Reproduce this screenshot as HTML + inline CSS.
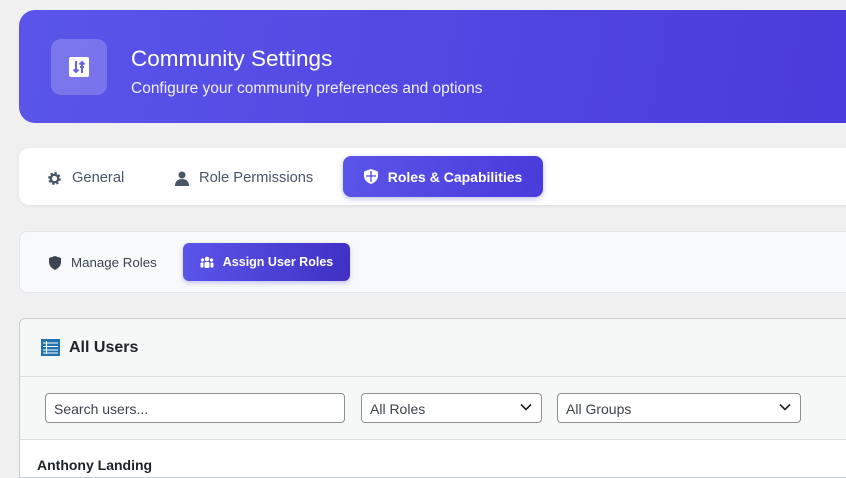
<!DOCTYPE html>
<html><head><style>
*{box-sizing:border-box;margin:0;padding:0}
body{width:846px;height:467px;overflow:hidden;background:#f0f0f1;font-family:"Liberation Sans",sans-serif;position:relative}
.hdr{position:absolute;left:19px;top:10px;width:850px;height:113px;border-radius:16px;background:linear-gradient(100deg,#5a55e9,#4a3adb)}
.ico{position:absolute;left:32px;top:29px;width:56px;height:56px;border-radius:10px;background:rgba(255,255,255,.2)}
.h1{position:absolute;left:112px;top:36px;color:#fff;font-size:22.5px}
.sub{position:absolute;left:112px;top:70px;color:#eef;font-size:15.5px}
.tabs{position:absolute;left:19px;top:148px;width:850px;height:57px;background:#fff;border-radius:10px;box-shadow:0 1px 3px rgba(0,0,0,.08)}
.t{position:absolute;top:22px;font-size:14.7px;color:#4a5565;display:flex;align-items:center;gap:10px}
.act{position:absolute;left:324px;top:8px;width:200px;height:41px;border-radius:8px;background:linear-gradient(100deg,#5b55e9,#4a3adb);color:#fff;font-weight:bold;font-size:14px;display:flex;align-items:center;justify-content:center;gap:10px;box-shadow:0 2px 6px rgba(80,70,230,.35)}
.sc{position:absolute;left:19px;top:231px;width:850px;height:62px;background:#f8f9fb;border:1px solid #e2e5ea;border-radius:8px}
.mr{position:absolute;left:29px;top:23px;font-size:13.3px;color:#3c4452;display:flex;gap:10px;align-items:center}
.ab{position:absolute;left:163px;top:11px;width:167px;height:38px;border-radius:6px;background:linear-gradient(100deg,#5b55e9,#4030c4);color:#fff;font-weight:bold;font-size:12.5px;display:flex;align-items:center;justify-content:center;gap:9px;box-shadow:0 2px 5px rgba(80,70,230,.3)}
.pn{position:absolute;left:19px;top:318px;width:850px;height:160px;background:#fff;border:1px solid #c9ccd1;border-radius:6px 0 0 0;overflow:hidden}
.ph{height:58px;background:#f6f7f7;border-bottom:1px solid #dcdcde;display:flex;align-items:center;padding-left:21px;gap:9px;font-weight:bold;font-size:16px;color:#1d2327}
.fr{height:63px;background:#f6f7f7;border-bottom:1px solid #dcdcde;position:relative}
.in{position:absolute;top:16px;height:30px;border:1px solid #8c8f94;border-radius:4px;background:#fff;font-size:14px;color:#3c434a;padding:7px 8px}
.car{position:absolute;right:9px;top:9px}
.name{position:absolute;left:17px;top:138px;font-size:14px;font-weight:bold;color:#1d2327}
</style></head><body>
<div class="hdr">
 <div class="ico"><svg style="position:absolute;left:18px;top:18px" width="20" height="20" viewBox="0 0 20 20"><rect x="0" y="0" width="20" height="20" rx="2" fill="#fff"/><path d="M7 4v11M4.5 12.5L7 15l2.5-2.5M13 16V5M10.5 7.5L13 5l2.5 2.5M11 10h4" stroke="#6a63ea" stroke-width="2" fill="none"/></svg></div>
 <div class="h1">Community Settings</div>
 <div class="sub">Configure your community preferences and options</div>
</div>
<div class="tabs">
 <div class="t" style="left:28px"><svg width="15" height="15" viewBox="0 0 16 16"><circle cx="8" cy="8" r="5" fill="none" stroke="#4a5565" stroke-width="3.5" stroke-dasharray="2.2 1.7"/><circle cx="8" cy="8" r="4" fill="none" stroke="#4a5565" stroke-width="2.4"/></svg>General</div>
 <div class="t" style="left:156px"><svg width="14" height="15" viewBox="0 0 14 15"><circle cx="7" cy="4" r="3.5" fill="#4a5565"/><path d="M0 15c0-5 3-7 7-7s7 2 7 7z" fill="#4a5565"/></svg>Role Permissions</div>
 <div class="act"><svg width="14" height="15" viewBox="0 0 14 15"><path d="M7 0L0 2.5v4C0 11 3 13.5 7 15c4-1.5 7-4 7-8.5v-4z" fill="#fff"/><path d="M7 2v11M2 7h10" stroke="#5048e0" stroke-width="1.3"/></svg>Roles &amp; Capabilities</div>
</div>
<div class="sc">
 <div class="mr"><svg width="12" height="14" viewBox="0 0 12 14"><path d="M6 0L0 2v4c0 4 3 6.5 6 8 3-1.5 6-4 6-8V2z" fill="#3c4452"/></svg>Manage Roles</div>
 <div class="ab"><svg width="14" height="13" viewBox="0 0 14 13"><circle cx="7" cy="3" r="2.3" fill="#fff"/><circle cx="2.5" cy="4" r="1.6" fill="#fff"/><circle cx="11.5" cy="4" r="1.6" fill="#fff"/><rect x="4.5" y="6" width="5" height="6" rx="1.5" fill="#fff"/><rect x="0.5" y="6.5" width="3" height="5" rx="1" fill="#fff"/><rect x="10.5" y="6.5" width="3" height="5" rx="1" fill="#fff"/></svg>Assign User Roles</div>
</div>
<div class="pn">
 <div class="ph"><svg width="19" height="17" viewBox="0 0 19 17"><rect x="0" y="0" width="19" height="17" fill="#2271b1"/><path d="M2 4h15M2 7.5h15M2 11h15M2 14h15M5.5 2v13" stroke="#fff" stroke-width="1.1"/></svg>All Users</div>
 <div class="fr">
  <div class="in" style="left:25px;width:300px">Search users...</div>
  <div class="in" style="left:341px;width:181px">All Roles<svg class="car" width="12" height="8" viewBox="0 0 12 8"><path d="M1 1.5l5 5 5-5" stroke="#1d2327" stroke-width="1.6" fill="none"/></svg></div>
  <div class="in" style="left:537px;width:244px">All Groups<svg class="car" width="12" height="8" viewBox="0 0 12 8"><path d="M1 1.5l5 5 5-5" stroke="#1d2327" stroke-width="1.6" fill="none"/></svg></div>
 </div>
 <div class="name">Anthony Landing</div>
</div>
</body></html>
